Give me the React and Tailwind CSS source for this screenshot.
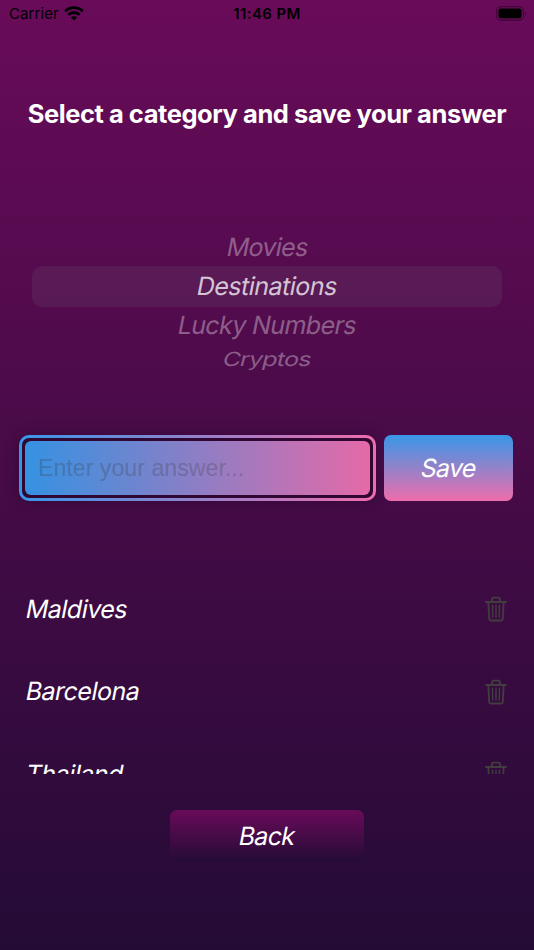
import React, { useState } from "react";

const categories = [
    { name: "Movies", style: "h-[39px] pt-[3px] text-[25px] tracking-[-0.7px] text-white/35" },
    { name: "Destinations", style: "h-[41px] text-[25px] tracking-[-0.5px] text-white/75" },
    { name: "Lucky Numbers", style: "h-[37px] text-[25px] tracking-[-0.6px] text-white/35" },
    { name: "Cryptos", style: "h-[32px] text-[25px] tracking-[-0.8px] text-white/35 scale-y-[0.78]" },
];

const answers = ["Maldives", "Barcelona", "Thailand"];

const StatusBar = () => (
    <div className="grid grid-cols-3 items-center h-[28px] pl-[9px] pr-[7px] text-black">
        <div className="flex items-center gap-[5px]">
            <span className="text-[15px] tracking-[0.1px]">Carrier</span>
            <svg className="w-[20px] h-[15px] -mt-[2px]" viewBox="0 0 20 15" fill="none" stroke="currentColor" strokeWidth="2.9">
                <path d="M1.2 5.2a12.6 12.6 0 0 1 17.6 0" />
                <path d="M4.4 8.8a8 8 0 0 1 11.2 0" />
                <path d="M10 14.6 6.9 11.5a4.4 4.4 0 0 1 6.2 0Z" fill="currentColor" stroke="none" />
            </svg>
        </div>
        <span className="text-center text-[15px] font-semibold tracking-[0.4px] -ml-[2px]">11:46 PM</span>
        <svg className="justify-self-end w-[31px] h-[15px] -mt-[2px]" viewBox="0 0 31 15">
            <rect x="0.7" y="0.7" width="26.6" height="13.4" rx="4" fill="none" stroke="#000" strokeOpacity="0.45" strokeWidth="1.1" />
            <rect x="2.5" y="2.5" width="23" height="9.8" rx="2.3" fill="#000" />
            <path d="M28.8 5v4.8c1.7-.8 1.7-4 0-4.8Z" fill="#000" fillOpacity="0.45" />
        </svg>
    </div>
);

// Upright letterforms leaned over
const Slanted = ({ children }) => <span className="inline-block -skew-x-[11deg]">{children}</span>;

const TrashIcon = () => (
    <svg className="w-[22px] h-[26px]" viewBox="0 0 22 26" fill="none" stroke="#423e3f" strokeWidth="1.8" strokeLinecap="round" strokeLinejoin="round">
        <path d="M1 6h20M7 6V3.2C7 2.2 7.6 1.6 8.6 1.6h4.8c1 0 1.6.6 1.6 1.6V6" />
        <path d="M3.3 6 4.2 23c.1 1 .6 1.5 1.5 1.5h10.6c.9 0 1.4-.5 1.5-1.5L18.7 6" />
        <path d="m7.5 9.3.2 11.7M11 9.3V21M14.500 9.300 14.300 21" strokeWidth="1.4" />
    </svg>
);

const App = () => {
    const [answer, setAnswer] = useState("");

    return (
        <div className="flex flex-col w-full h-[950px] overflow-hidden bg-linear-to-b/srgb from-[#690b59] to-[#240b36] font-['Inter','Liberation_Sans',sans-serif] text-white">
            <StatusBar />
            <h1 className="mt-[66px] h-[40px] leading-[40px] text-center whitespace-nowrap text-[25.5px] font-bold tracking-[-0.45px]">Select a category and save your answer</h1>

            {/* Category wheel */}
            <div className="flex flex-col mt-[93px] mx-[32px] h-[151px]">
                {categories.map((category) => (
                    <div key={category.name} className={`flex items-center justify-center shrink-0 rounded-[10px] ${category.style} ${category.name === "Destinations" ? "bg-[#767680]/14" : ""}`}>
                        <Slanted>{category.name}</Slanted>
                    </div>
                ))}
            </div>

            <div className="flex gap-[8px] mt-[57px] pl-[19px] pr-[21px] h-[66px]">
                <div className="w-[357px] p-[3px] rounded-[10px] bg-linear-to-r/srgb from-[#3897e8] to-[#ef6cac] shadow-[0_0_14px_rgba(20,0,25,0.35)]">
                    <div className="h-full p-[3px] rounded-[7px] bg-[#300632]">
                        <input
                            className="block w-full h-full px-[13px] rounded-[6px] bg-linear-to-r/srgb from-[#3592e2] to-[#e56aa8] font-['Liberation_Sans',sans-serif] text-[23.2px] text-black outline-none placeholder:text-[#3c3c43]/30"
                            placeholder="Enter your answer..."
                            value={answer}
                            onChange={(e) => setAnswer(e.target.value)}
                        />
                    </div>
                </div>
                <button className="w-[129px] pt-[2px] rounded-[7px] bg-linear-to-b/srgb from-[#3897e8] to-[#ee6dac] text-[25px] tracking-[-0.7px]"><Slanted>Save</Slanted></button>
            </div>

            {/* Saved answers */}
            <div className="mt-[67px] h-[206px] shrink-0 overflow-hidden">
                {answers.map((item) => (
                    <div key={item} className="flex items-center justify-between h-[82.5px] pl-[26px] pr-[27px]">
                        <span className="text-[25px] tracking-[-0.5px]"><Slanted>{item}</Slanted></span>
                        <button aria-label="Delete"><TrashIcon /></button>
                    </div>
                ))}
            </div>

            <button className="self-center shrink-0 mt-[36px] w-[194px] h-[52px] pt-[2px] rounded-[7px] bg-linear-to-b/srgb from-[#690b59] to-[#240b36] text-[25px] tracking-[-0.7px]"><Slanted>Back</Slanted></button>
        </div>
    );
};

export default App;
